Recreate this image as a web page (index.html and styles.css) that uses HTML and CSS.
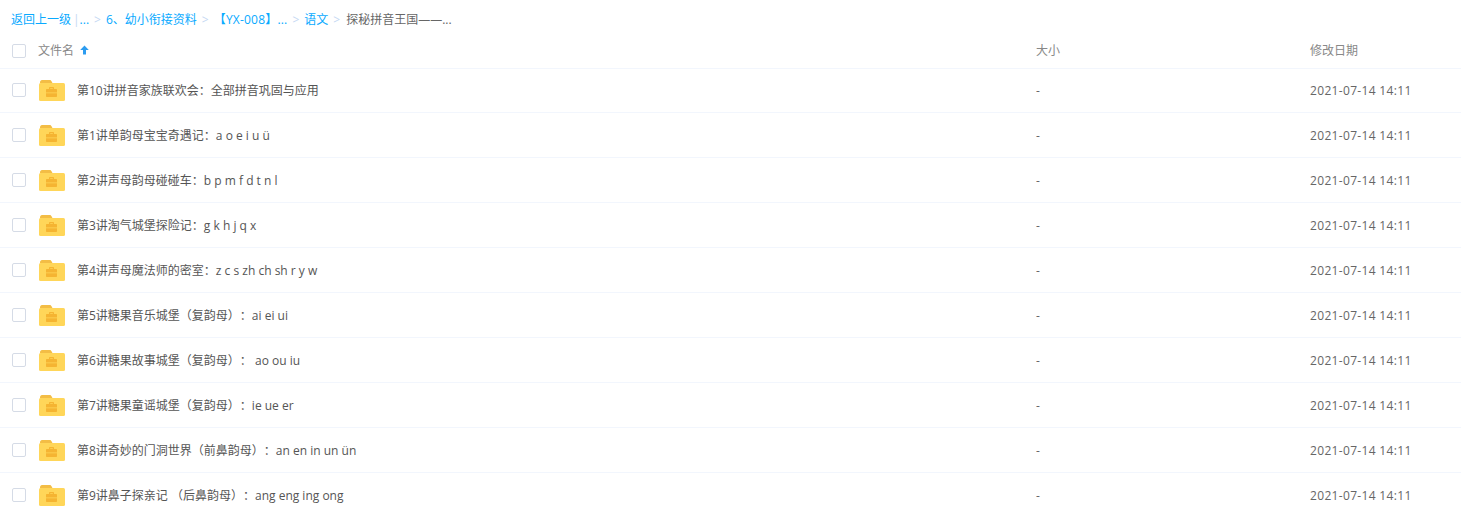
FILE: index.html
```html
<!DOCTYPE html>
<html>

<head>
  <meta charset="UTF-8">
  <title>文件列表</title>
  <link rel="stylesheet" href="styles.css">
</head>

<body>
  <svg class="defs" width="0" height="0">
    <symbol id="folder" viewBox="0 0 26 21">
      <path d="M1 2.500C1 1.100 1.800 0 3 0h7.500c1 0 1.600.4 2 1.200L13.500 3H1z" fill="#f3bd45" />
      <rect x="0" y="3" width="26" height="18" rx="1.500" fill="#ffd659" />
      <path d="M10 9V7.800c0-.5.300-.8.800-.8h3.400c.5 0 .8.300.8.800V9h2c.6 0 1 .4 1 1v2.500H7V10c0-.6.400-1 1-1zM11.200 9h2.600V8.200h-2.600z" fill="#f5b432" />
      <path d="M7 13.300h11V16c0 .6-.4 1-1 1H8c-.6 0-1-.4-1-1z" fill="#f5b432" />
    </symbol>
  </svg>

  <div class="crumbs">
    <a>返回上一级</a><span class="bar">|</span><a>...</a><span class="sep">&gt;</span><a>6、幼小衔接资料</a><span class="sep">&gt;</span><a class="wide">【YX-008】...</a><span class="sep">&gt;</span><a>语文</a><span class="sep">&gt;</span><span class="current">探秘拼音王国——...</span>
  </div>

  <div class="row head">
    <span class="check"></span>
    <span class="name-head">文件名
      <svg class="arrow" width="9" height="10" viewBox="0 0 9 10">
        <path d="M4.500 0.500L8.800 5H6v4.500H3V5H0.200z" fill="#2c9cf0" />
      </svg>
    </span>
    <span>大小</span>
    <span>修改日期</span>
  </div>

  <div class="row first">
    <span class="check"></span>
    <span class="name"><svg class="folder"><use href="#folder" /></svg>第10讲拼音家族联欢会：全部拼音巩固与应用</span>
    <span>-</span>
    <span class="date">2021-07-14 14:11</span>
  </div>
  <div class="row">
    <span class="check"></span>
    <span class="name"><svg class="folder"><use href="#folder" /></svg>第1讲单韵母宝宝奇遇记：a o e i u ü</span>
    <span>-</span>
    <span class="date">2021-07-14 14:11</span>
  </div>
  <div class="row">
    <span class="check"></span>
    <span class="name"><svg class="folder"><use href="#folder" /></svg>第2讲声母韵母碰碰车：b p m f d t n l</span>
    <span>-</span>
    <span class="date">2021-07-14 14:11</span>
  </div>
  <div class="row">
    <span class="check"></span>
    <span class="name"><svg class="folder"><use href="#folder" /></svg>第3讲淘气城堡探险记：g k h j q x</span>
    <span>-</span>
    <span class="date">2021-07-14 14:11</span>
  </div>
  <div class="row">
    <span class="check"></span>
    <span class="name"><svg class="folder"><use href="#folder" /></svg>第4讲声母魔法师的密室：z c s zh ch sh r y w</span>
    <span>-</span>
    <span class="date">2021-07-14 14:11</span>
  </div>
  <div class="row">
    <span class="check"></span>
    <span class="name"><svg class="folder"><use href="#folder" /></svg>第5讲糖果音乐城堡（复韵母）：ai ei ui</span>
    <span>-</span>
    <span class="date">2021-07-14 14:11</span>
  </div>
  <div class="row">
    <span class="check"></span>
    <span class="name"><svg class="folder"><use href="#folder" /></svg>第6讲糖果故事城堡（复韵母）： ao ou iu</span>
    <span>-</span>
    <span class="date">2021-07-14 14:11</span>
  </div>
  <div class="row">
    <span class="check"></span>
    <span class="name"><svg class="folder"><use href="#folder" /></svg>第7讲糖果童谣城堡（复韵母）：ie ue er</span>
    <span>-</span>
    <span class="date">2021-07-14 14:11</span>
  </div>
  <div class="row">
    <span class="check"></span>
    <span class="name"><svg class="folder"><use href="#folder" /></svg>第8讲奇妙的门洞世界（前鼻韵母）：an en in un ün</span>
    <span>-</span>
    <span class="date">2021-07-14 14:11</span>
  </div>
  <div class="row">
    <span class="check"></span>
    <span class="name"><svg class="folder"><use href="#folder" /></svg>第9讲鼻子探亲记 （后鼻韵母）：ang eng ing ong</span>
    <span>-</span>
    <span class="date">2021-07-14 14:11</span>
  </div>
</body>

</html>
```

FILE: styles.css
```css
html,
body {
  height: 510px;
  overflow: hidden;
}

body {
  margin: 0;
  font-family: "Open Sans", "Noto Sans CJK SC", sans-serif;
  font-size: 12px;
  color: #666;
  background: #fff;
  text-spacing-trim: space-all;
}

.defs {
  display: block;
  height: 0;
}

.crumbs {
  display: flex;
  align-items: center;
  height: 32px;
  box-sizing: border-box;
  padding: 6px 0 0 11px;
  color: #09aaff;
}

.bar {
  margin-left: 2px;
  color: #c5d8f3;
}

.sep {
  margin: 0 5px;
  color: #c5d8f3;
}

.wide {
  letter-spacing: .2px;
}

.current {
  color: #666;
  margin-left: 1px;
}

.row {
  display: grid;
  grid-template-columns: 27px 997px 274px 1fr;
  align-items: center;
  height: 45px;
  box-sizing: border-box;
  padding-left: 12px;
  border-bottom: 1px solid #f2f6fd;
}

.head {
  height: 37px;
  color: #888;
}

.head .check {
  margin-top: 1px;
}

.first {
  height: 44px;
  padding-bottom: 1px;
}

.check {
  display: block;
  width: 14px;
  height: 14px;
  box-sizing: border-box;
  border: 1px solid #d5dbe6;
  border-radius: 2px;
}

.name-head {
  display: flex;
  align-items: center;
  gap: 6px;
  margin-left: -1px;
}

.arrow {
  display: block;
}

.name {
  display: flex;
  align-items: center;
  color: #555;
}

.date {
  letter-spacing: .33px;
}

.folder {
  flex: none;
  width: 26px;
  height: 21px;
  margin-right: 12px;
}
```
